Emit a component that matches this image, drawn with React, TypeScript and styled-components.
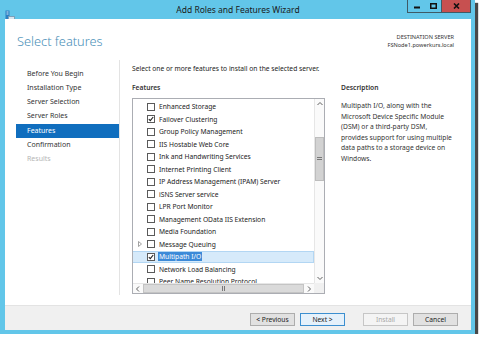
import styled, { createGlobalStyle } from 'styled-components';

const colors = {
  frame: "#62c6e9",
  accent: "#4a8fb8",
  navSel: "#106ebe",
  text: "#222222",
  border: "#abadb3",
  footer: "#f0f0f0"
}

const GlobalStyle = createGlobalStyle`
  body {
    margin: 0;
    background: #ffffff;
    font-family: "Noto Sans", "Liberation Sans", sans-serif;
  }
`;

const Window = styled.div`
  width: 475px;
  height: 334px;
  box-sizing: border-box;
  background: ${colors.frame};
  padding: 0 4px 4px 5px;
  display: flex;
  flex-direction: column;
  box-shadow: 3px 3px 1px rgba(40, 40, 40, 0.85);
`;

const TitleBar = styled.div`
  height: 19px;
  display: grid;
  grid-template-columns: 1fr auto 1fr;
  align-items: start;
`;

const TitleIcon = styled.div`
  padding-top: 4px;
  height: 11px;
`;

const Title = styled.div`
  font-size: 8.5px;
  line-height: 19px;
  color: #1a1a1a;
`;

const Caption = styled.div`
  justify-self: end;
  display: flex;
  border: 1px solid #3f5a66;
  border-top: none;
  height: 13px;
  box-sizing: border-box;
`;

const CapButton = styled.div<{ $close?: boolean; $w: number }>`
  width: ${p => p.$w}px;
  display: flex;
  align-items: center;
  justify-content: center;
  background: ${p => (p.$close ? "#c75050" : "transparent")};
  border-left: ${p => (p.$close ? "1px solid #3f5a66" : "none")};
`;

const Client = styled.div`
  flex: 1;
  background: #ffffff;
  display: flex;
  flex-direction: column;
  min-height: 0;
`;

const Header = styled.div`
  height: 41px;
  display: flex;
  justify-content: space-between;
  align-items: flex-start;
  padding: 0 17px 0 12px;
`;

const PageTitle = styled.h1`
  margin: 13px 0 0 0;
  font-size: 12.8px;
  line-height: 18px;
  font-weight: 300;
  color: ${colors.accent};
`;

const Destination = styled.div`
  margin-top: 14px;
  text-align: right;
  font-size: 5.6px;
  line-height: 8px;
  color: #333;
`;

const Body = styled.div`
  flex: 1;
  display: flex;
  padding: 0 0 10px 11px;
  min-height: 0;
`;

const Nav = styled.ul`
  list-style: none;
  margin: 0;
  padding: 6.5px 0 0 0;
  width: 103px;
  border-right: 1px solid #e3e3e3;
`;

const NavItem = styled.li<{ $active?: boolean; $disabled?: boolean }>`
  height: 14.3px;
  line-height: 14.3px;
  padding-left: 11px;
  font-size: 7px;
  color: ${p => (p.$active ? "#fff" : p.$disabled ? "#b5b5b5" : "#333")};
  background: ${p => (p.$active ? colors.navSel : "transparent")};
`;

const Content = styled.div`
  flex: 1;
  padding: 3px 12px 0 12px;
  display: grid;
  grid-template-columns: 193px 1fr;
  grid-template-rows: auto 1fr;
  column-gap: 16px;
`;

const Intro = styled.div`
  grid-column: 1 / 3;
  font-size: 6.7px;
  line-height: 11px;
  color: ${colors.text};
  margin-bottom: 9px;
`;

const ColumnHead = styled.div<{ $gap: number }>`
  font-size: 6.7px;
  font-weight: 600;
  line-height: 10px;
  color: #333;
  margin-bottom: ${p => p.$gap}px;
`;

const ListBox = styled.div`
  width: 193px;
  height: 196px;
  box-sizing: border-box;
  border: 1px solid ${colors.border};
  display: grid;
  grid-template-columns: 1fr 10px;
  grid-template-rows: 1fr 10px;
`;

const Rows = styled.div`
  overflow: hidden;
  padding-top: 1.5px;
`;

const Row = styled.div<{ $selected?: boolean }>`
  height: 12.5px;
  box-sizing: border-box;
  display: flex;
  align-items: center;
  background: ${p => (p.$selected ? "#d6eafa" : "transparent")};
  border: 1px solid ${p => (p.$selected ? "#b2d6f3" : "transparent")};
  border-left: none;
  white-space: nowrap;
`;

const Expander = styled.div`
  width: 14px;
  display: flex;
  justify-content: center;
`;

const Check = styled.div`
  width: 8px;
  height: 8px;
  box-sizing: border-box;
  border: 1px solid #5a5a5a;
  background: #fff;
  margin-right: 3px;
  display: flex;
  align-items: center;
  justify-content: center;
`;

const Label = styled.span<{ $selected?: boolean }>`
  font-size: 6.7px;
  line-height: 9px;
  padding: 0 1px;
  color: ${p => (p.$selected ? "#fff" : "#222")};
  background: ${p => (p.$selected ? "#3c8ad8" : "transparent")};
`;

const VScroll = styled.div`
  background: #fafafa;
  border-left: 1px solid #e6e6e6;
  display: flex;
  flex-direction: column;
  align-items: stretch;
`;

const Arrow = styled.div`
  height: 10px;
  width: 10px;
  display: flex;
  align-items: center;
  justify-content: center;
  flex-shrink: 0;
`;

const VThumb = styled.div`
  height: 42px;
  margin-top: 28px;
  background: #d2d2d2;
  border: 1px solid #bdbdbd;
  display: flex;
  align-items: center;
  justify-content: center;
`;

const Spacer = styled.div`
  flex: 1;
`;

const HScroll = styled.div`
  background: #fafafa;
  border-top: 1px solid #e6e6e6;
  display: flex;
  align-items: stretch;
`;

const HThumb = styled.div`
  flex: 1;
  background: #dadada;
  border: 1px solid #c4c4c4;
  display: flex;
  align-items: center;
  justify-content: center;
`;

const Corner = styled.div`
  background: #f0f0f0;
`;

const Grip = styled.div<{ $vertical?: boolean }>`
  width: ${p => (p.$vertical ? "5px" : "4px")};
  height: ${p => (p.$vertical ? "4px" : "5px")};
  background: ${p =>
    p.$vertical
      ? "repeating-linear-gradient(to bottom, #777 0 1px, transparent 1px 2px)"
      : "repeating-linear-gradient(to right, #777 0 1px, transparent 1px 2px)"};
`;

const Description = styled.p`
  font-size: 6.7px;
  line-height: 10.5px;
  color: #333;
  margin: 0;
`;

const Footer = styled.div`
  height: 25px;
  box-sizing: border-box;
  background: ${colors.footer};
  border-top: 1px solid #e3e3e3;
  display: flex;
  justify-content: flex-end;
  align-items: flex-start;
  gap: 5px;
  padding: 7px 13px 0 0;
`;

const Button = styled.button<{ $focus?: boolean; $gapLeft?: number }>`
  width: 45px;
  height: 13px;
  padding: 0;
  margin-left: ${p => p.$gapLeft ?? 0}px;
  font-family: inherit;
  font-size: 6.7px;
  color: ${p => (p.disabled ? "#a8a8a8" : "#222")};
  background: ${p => (p.disabled ? "#f4f4f4" : p.$focus ? "#e5f1fb" : "#e1e1e1")};
  border: 1px solid ${p => (p.disabled ? "#c6c6c6" : p.$focus ? "#3c8fd0" : "#adadad")};
`;

const features = [
  { name: "Enhanced Storage" },
  { name: "Failover Clustering", checked: true },
  { name: "Group Policy Management" },
  { name: "IIS Hostable Web Core" },
  { name: "Ink and Handwriting Services" },
  { name: "Internet Printing Client" },
  { name: "IP Address Management (IPAM) Server" },
  { name: "iSNS Server service" },
  { name: "LPR Port Monitor" },
  { name: "Management OData IIS Extension" },
  { name: "Media Foundation" },
  { name: "Message Queuing", expandable: true },
  { name: "Multipath I/O", checked: true, selected: true },
  { name: "Network Load Balancing" },
  { name: "Peer Name Resolution Protocol" },
];

const steps = [
  "Before You Begin",
  "Installation Type",
  "Server Selection",
  "Server Roles",
  "Features",
  "Confirmation",
  "Results",
];

const Tick = () => (
  <svg width="6" height="6" viewBox="0 0 6 6">
    <path d="M0.8 3.2 L2.3 4.7 L5.2 1" fill="none" stroke="#222" strokeWidth="1.1" />
  </svg>
);

const Chevron = ({ dir }: { dir: "up" | "down" | "left" | "right" }) => {
  const d = {
    up: "M1.5 5 L4 2.5 L6.5 5",
    down: "M1.5 3 L4 5.5 L6.5 3",
    left: "M5 1.5 L2.5 4 L5 6.5",
    right: "M3 1.5 L5.5 4 L3 6.5",
  }[dir];
  return (
    <svg width="8" height="8" viewBox="0 0 8 8">
      <path d={d} fill="none" stroke="#606060" strokeWidth="1" />
    </svg>
  );
};

const App = () => {
  return (
    <>
      <GlobalStyle />
      <Window>
        <TitleBar>
          <TitleIcon>
            <svg width="10" height="11" viewBox="0 0 10 11">
              <rect x="0.5" y="0.5" width="4" height="9" fill="#2c7fc2" />
              <rect x="1.5" y="1.5" width="2" height="1" fill="#cfe7f7" />
              <rect x="1.5" y="3.5" width="2" height="1" fill="#cfe7f7" />
              <rect x="3" y="6" width="7" height="4.5" rx="0.5" fill="#7d9fb8" />
              <rect x="4" y="7" width="5" height="2.5" fill="#d9e6ef" />
            </svg>
          </TitleIcon>
          <Title>Add Roles and Features Wizard</Title>
          <Caption>
            <CapButton $w={17}>
              <svg width="6" height="6" viewBox="0 0 6 6">
                <rect x="0" y="3.5" width="6" height="2" fill="#111" />
              </svg>
            </CapButton>
            <CapButton $w={16}>
              <svg width="7" height="6" viewBox="0 0 7 6">
                <rect x="0.75" y="0.75" width="5.5" height="4.5" fill="none" stroke="#111" strokeWidth="1.5" />
              </svg>
            </CapButton>
            <CapButton $w={28} $close>
              <svg width="7" height="6" viewBox="0 0 7 6">
                <path d="M1 0.5 L6 5.5 M6 0.5 L1 5.5" stroke="#111" strokeWidth="1.6" />
              </svg>
            </CapButton>
          </Caption>
        </TitleBar>
        <Client>
          <Header>
            <PageTitle>Select features</PageTitle>
            <Destination>
              DESTINATION SERVER
              <br />
              FSNode1.powerkurs.local
            </Destination>
          </Header>
          <Body>
            <Nav>
              {steps.map((s, i) => (
                <NavItem key={s} $active={i === 4} $disabled={i === 6}>
                  {s}
                </NavItem>
              ))}
            </Nav>
            <Content>
              <Intro>Select one or more features to install on the selected server.</Intro>
              <div>
                <ColumnHead $gap={5}>Features</ColumnHead>
                <ListBox>
                  <Rows>
                    {features.map(f => (
                      <Row key={f.name} $selected={f.selected}>
                        <Expander>
                          {f.expandable && (
                            <svg width="4" height="6" viewBox="0 0 4 6">
                              <path d="M0.5 0.5 L3.5 3 L0.5 5.5 Z" fill="none" stroke="#8a8a8a" strokeWidth="0.8" />
                            </svg>
                          )}
                        </Expander>
                        <Check>{f.checked && <Tick />}</Check>
                        <Label $selected={f.selected}>{f.name}</Label>
                      </Row>
                    ))}
                  </Rows>
                  <VScroll>
                    <Arrow>
                      <Chevron dir="up" />
                    </Arrow>
                    <VThumb>
                      <Grip $vertical />
                    </VThumb>
                    <Spacer />
                    <Arrow>
                      <Chevron dir="down" />
                    </Arrow>
                  </VScroll>
                  <HScroll>
                    <Arrow>
                      <Chevron dir="left" />
                    </Arrow>
                    <HThumb>
                      <Grip />
                    </HThumb>
                    <Arrow>
                      <Chevron dir="right" />
                    </Arrow>
                  </HScroll>
                  <Corner />
                </ListBox>
              </div>
              <div>
                <ColumnHead $gap={8}>Description</ColumnHead>
                <Description>
                  Multipath I/O, along with the
                  <br />
                  Microsoft Device Specific Module
                  <br />
                  (DSM) or a third-party DSM,
                  <br />
                  provides support for using multiple
                  <br />
                  data paths to a storage device on
                  <br />
                  Windows.
                </Description>
              </div>
            </Content>
          </Body>
          <Footer>
            <Button>&lt; Previous</Button>
            <Button $focus>Next &gt;</Button>
            <Button disabled $gapLeft={13}>Install</Button>
            <Button>Cancel</Button>
          </Footer>
        </Client>
      </Window>
    </>
  );
};

export default App;
